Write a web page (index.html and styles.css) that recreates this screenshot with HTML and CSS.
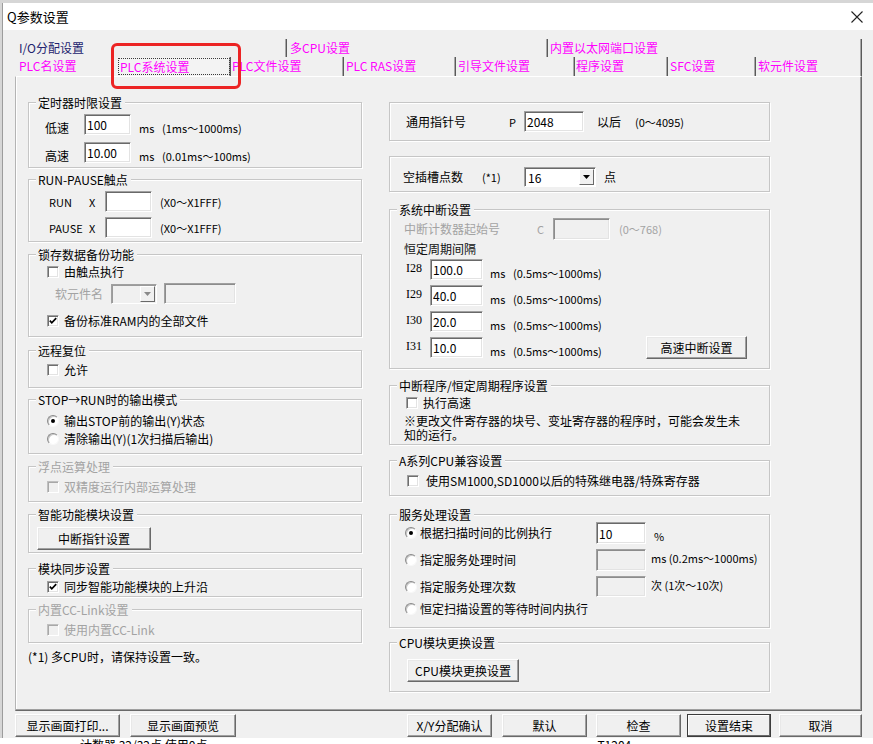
FILE: index.html
```html
<!DOCTYPE html>
<html lang="zh-CN">
<head>
<meta charset="utf-8">
<title>Q参数设置</title>
<link rel="stylesheet" href="styles.css">
</head>
<body>
<div class="screen">
  <div class="window">
    <div class="titlebar">
      <span class="title">Q参数设置</span>
      <svg class="close" width="12" height="12" viewBox="0 0 12 12"><path d="M0.5 0.5 L11.5 11.5 M11.5 0.5 L0.5 11.5" stroke="#222" stroke-width="1.1" fill="none"/></svg>
    </div>
    <div class="dlg">
      <div class="tabrow row1">
        <div class="tab first navy">I/O分配设置</div>
        <div class="tab p3">多CPU设置</div>
        <div class="tab">内置以太网端口设置</div>
      </div>
      <div class="tabrow row2">
        <div class="tab first nosep">PLC名设置</div>
        <div class="tab sel"><span class="focus">PLC系统设置</span></div>
        <div class="tab p1">PLC文件设置</div>
        <div class="tab">PLC RAS设置</div>
        <div class="tab">引导文件设置</div>
        <div class="tab p1">程序设置</div>
        <div class="tab">SFC设置</div>
        <div class="tab">软元件设置</div>
      </div>
      <div class="panel">
        <div class="col col-left">
          <div class="group g1">
            <div class="legend">定时器时限设置</div>
            <div class="row r21 mt4 pl16">
              <span class="w39 lo">低速</span>
              <input class="edit w47" value="100">
              <span class="ml8 w23 lo lat">ms</span>
              <span class="lo lat">(1ms～1000ms)</span>
            </div>
            <div class="row r21 mt7 pl16">
              <span class="w39 lo">高速</span>
              <input class="edit w47" value="10.00">
              <span class="ml8 w23 lo lat">ms</span>
              <span class="lo lat">(0.01ms～100ms)</span>
            </div>
          </div>

          <div class="group g2">
            <div class="legend">RUN-PAUSE触点</div>
            <div class="row r21 mt4 pl20">
              <span class="w40 lat">RUN</span><span class="w16 lat">X</span>
              <input class="edit w47" value="">
              <span class="ml8 lat">(X0～X1FFF)</span>
            </div>
            <div class="row r21 mt5 pl20">
              <span class="w40 lat">PAUSE</span><span class="w16 lat">X</span>
              <input class="edit w47" value="">
              <span class="ml8 lat">(X0～X1FFF)</span>
            </div>
          </div>

          <div class="group g3">
            <div class="legend">锁存数据备份功能</div>
            <div class="crow mt2 pl18"><span class="chk"></span><span>由触点执行</span></div>
            <div class="row r21 mt3 pl26">
              <span class="w56 dis">软元件名</span>
              <span class="combo off w46"><span class="val"></span><span class="drop"><svg width="7" height="4" viewBox="0 0 7 4"><polygon points="0,0 7,0 3.5,4" fill="#8a8a8a"/></svg></span></span>
              <input class="edit off w72 ml7" value="" disabled>
            </div>
            <div class="crow mt9 pl18"><span class="chk"><svg width="10" height="10" viewBox="0 0 10 10"><path d="M1.8 4.6 L3.8 6.8 L8.2 2.2" stroke="#000" stroke-width="1.7" fill="none"/></svg></span><span>备份标准RAM内的全部文件</span></div>
          </div>

          <div class="group g4">
            <div class="legend">远程复位</div>
            <div class="crow mt4 pl18"><span class="chk"></span><span>允许</span></div>
          </div>

          <div class="group g5">
            <div class="legend">STOP→RUN时的输出模式</div>
            <div class="crow mt6 pl18"><span class="radio"><i class="dot"></i></span><span>输出STOP前的输出(Y)状态</span></div>
            <div class="crow mt2 pl18"><span class="radio"></span><span>清除输出(Y)(1次扫描后输出)</span></div>
          </div>

          <div class="group g6">
            <div class="legend dis">浮点运算处理</div>
            <div class="crow mt5 pl18"><span class="chk off"></span><span class="dis">双精度运行内部运算处理</span></div>
          </div>

          <div class="group g7">
            <div class="legend">智能功能模块设置</div>
            <div class="mt5 pl8"><button class="btn bw114">中断指针设置</button></div>
          </div>

          <div class="group g8">
            <div class="legend">模块同步设置</div>
            <div class="crow mt3 pl18"><span class="chk"><svg width="10" height="10" viewBox="0 0 10 10"><path d="M1.8 4.6 L3.8 6.8 L8.2 2.2" stroke="#000" stroke-width="1.7" fill="none"/></svg></span><span>同步智能功能模块的上升沿</span></div>
          </div>

          <div class="group g9">
            <div class="legend dis">内置CC-Link设置</div>
            <div class="crow mt5 pl18"><span class="chk off"></span><span class="dis">使用内置CC-Link</span></div>
          </div>

          <p class="footnote">(*1) 多CPU时，请保持设置一致。</p>
        </div>

        <div class="col col-right">
          <div class="group h1">
            <div class="row r21 pl16">
              <span class="w103">通用指针号</span><span class="w15 lat">P</span>
              <input class="edit w60" value="2048">
              <span class="ml13 w38">以后</span>
              <span class="lat">(0～4095)</span>
            </div>
          </div>

          <div class="group h2">
            <div class="row r20 pl13">
              <span class="w79">空插槽点数</span><span class="w42 lat">(*1)</span>
              <span class="combo w72"><span class="val">16</span><span class="drop"><svg width="7" height="4" viewBox="0 0 7 4"><polygon points="0,0 7,0 3.5,4" fill="#000"/></svg></span></span>
              <span class="ml8">点</span>
            </div>
          </div>

          <div class="group h3">
            <div class="legend">系统中断设置</div>
            <div class="row r22 mt1 pl14">
              <span class="w133 dis">中断计数器起始号</span><span class="w16 dis lat">C</span>
              <input class="edit off w57" value="" disabled>
              <span class="ml9 dis lat">(0～768)</span>
            </div>
            <div class="mt2 pl14 strong">恒定周期间隔</div>
            <div class="row r21 mt3 pl16">
              <span class="w24 hi ser">I28</span><input class="edit w53" value="100.0">
              <span class="ml7 w23 lo lat">ms</span><span class="lo lat">(0.5ms～1000ms)</span>
            </div>
            <div class="row r21 mt5 pl16">
              <span class="w24 hi ser">I29</span><input class="edit w53" value="40.0">
              <span class="ml7 w23 lo lat">ms</span><span class="lo lat">(0.5ms～1000ms)</span>
            </div>
            <div class="row r21 mt5 pl16">
              <span class="w24 hi ser">I30</span><input class="edit w53" value="20.0">
              <span class="ml7 w23 lo lat">ms</span><span class="lo lat">(0.5ms～1000ms)</span>
            </div>
            <div class="row r21 mt5 pl16">
              <span class="w24 hi ser">I31</span><input class="edit w53" value="10.0">
              <span class="ml7 w23 lo lat">ms</span><span class="lo lat">(0.5ms～1000ms)</span>
              <button class="btn bw101 push">高速中断设置</button>
            </div>
          </div>

          <div class="group h4">
            <div class="legend">中断程序/恒定周期程序设置</div>
            <div class="crow mt2 pl16"><span class="chk"></span><span>执行高速</span></div>
            <p class="note">※更改文件寄存器的块号、变址寄存器的程序时，可能会发生未<br>知的运行。</p>
          </div>

          <div class="group h5">
            <div class="legend">A系列CPU兼容设置</div>
            <div class="crow wide mt5 pl17"><span class="chk"></span><span>使用SM1000,SD1000以后的特殊继电器/特殊寄存器</span></div>
          </div>

          <div class="group h6">
            <div class="legend">服务处理设置</div>
            <div class="row r22 pl15">
              <span class="radio"><i class="dot"></i></span><span class="w176 ml3">根据扫描时间的比例执行</span>
              <input class="edit w50" value="10"><span class="ml8 lo lat">%</span>
            </div>
            <div class="row r22 mt5 pl15">
              <span class="radio"></span><span class="w176 ml3">指定服务处理时间</span>
              <input class="edit off w50" value="" disabled><span class="ml5 hi lat">ms (0.2ms～1000ms)</span>
            </div>
            <div class="row r21 mt5 pl15">
              <span class="radio"></span><span class="w176 ml3">指定服务处理次数</span>
              <input class="edit off w50" value="" disabled><span class="ml5 hi lat">次 (1次～10次)</span>
            </div>
            <div class="row r14 mt5 pl15">
              <span class="radio"></span><span class="ml3">恒定扫描设置的等待时间内执行</span>
            </div>
          </div>

          <div class="group h7">
            <div class="legend">CPU模块更换设置</div>
            <div class="mt9 pl17"><button class="btn bw112">CPU模块更换设置</button></div>
          </div>
        </div>
      </div>

      <div class="footer">
        <button class="btn f1">显示画面打印...</button>
        <button class="btn f2">显示画面预览</button>
        <button class="btn f3">X/Y分配确认</button>
        <button class="btn f4">默认</button>
        <button class="btn f5">检查</button>
        <button class="btn f6 default">设置结束</button>
        <button class="btn f7">取消</button>
      </div>
    </div>
  </div>
  <div class="behind"><span class="b1">计数器 32/32点 使用0点</span><span class="b2">T1204</span></div>
  <div class="annot"></div>
</div>
</body>
</html>
```

FILE: styles.css
```css
* { box-sizing: border-box; margin: 0; padding: 0; }
html, body { width: 873px; height: 744px; overflow: hidden; }
body {
  background: #d6d6d6;
  font-family: "Noto Sans CJK SC", "Noto Sans", sans-serif;
  font-size: 12px;
  line-height: 14px;
  color: #000;
}
.screen { position: relative; width: 873px; height: 744px; padding-top: 3px; display: flex; flex-direction: column; }
.window {
  margin-left: 2px; width: 871px; height: 735px; flex: none;
  border-left: 1px solid #9c9c9c; background: #f0f0f0;
  display: flex; flex-direction: column;
}
.titlebar {
  height: 27px; flex: none; background: #fff;
  display: flex; align-items: center; justify-content: space-between;
  padding: 0 10px 0 4px;
}
.title { font-size: 13px; line-height: 16px; }
.close { display: block; }

.dlg { padding: 9px 11px 0 12px; display: flex; flex-direction: column; }

/* tabs */
.tabrow { display: grid; width: 847px; }
.row1 { grid-template-columns: 272px 261px 314px; height: 18px; }
.row2 { grid-template-columns: 101px 115px 113px 112px 119px 93px 88px 106px; height: 19px; }
.tab {
  color: #ff00ff; white-space: nowrap; overflow: hidden;
  padding-left: 2px; line-height: 18px;
  border-right: 1px solid #5a5a5a; box-shadow: inset -1px 0 0 #a8a8a8;
}
.tab.first { padding-left: 4px; }
.tab.p3 { padding-left: 3px; }
.tab.p1 { padding-left: 1px; }
.tab.nosep { border-right: none; box-shadow: none; }
.tab.navy { color: #23236e; }
.tab.sel { padding: 1px 0 1px 2px; background: #f3f3f3; }
.focus { display: block; height: 17px; border: 1px dotted #3a3a3a; padding-left: 1px; line-height: 15px; }

/* panel */
.panel {
  width: 847px; height: 635px; flex: none;
  border-top: 1px solid #fff; border-left: 1px solid #b4b4b4;
  border-right: 1px solid #696969; border-bottom: 1px solid #696969;
  box-shadow: inset -1px -1px 0 #a0a0a0, inset 1px 0 0 #fff;
  display: flex; gap: 27px; padding: 25px 0 0 12px;
}
.col { display: flex; flex-direction: column; flex: none; }
.col-left { width: 334px; }
.col-right { width: 381px; }

.group {
  flex: none;
  border: 1px solid #c6c6c6;
  box-shadow: 1px 1px 0 #fff, inset 1px 1px 0 #fff;
}
.legend {
  width: max-content; height: 15px; line-height: 15px;
  margin: -8px 0 0 7px; padding: 0 3px 0 2px;
  background: #f0f0f0;
}
.dis { color: #a3a3a3; }
.strong { color: #111; }
.lat { font-size: 11px; }
.ser { font-family: "Liberation Serif", "DejaVu Serif", serif; font-size: 12px; }

.g1 { height: 66px; }
.g2 { height: 63px; margin-top: 11px; }
.g3 { height: 83px; margin-top: 12px; }
.g4 { height: 38px; margin-top: 13px; }
.g5 { height: 55px; margin-top: 11px; }
.g6 { height: 36px; margin-top: 12px; }
.g7 { height: 39px; margin-top: 12px; }
.g8 { height: 29px; margin-top: 15px; }
.g9 { height: 34px; margin-top: 12px; }
.footnote { margin-top: 7px; }

.h1 { height: 39px; padding-top: 8px; }
.h2 { height: 36px; margin-top: 15px; padding-top: 10px; }
.h3 { height: 160px; margin-top: 17px; }
.h4 { height: 60px; margin-top: 16px; }
.h5 { height: 36px; margin-top: 15px; }
.h6 { height: 114px; margin-top: 18px; }
.h7 { height: 50px; margin-top: 14px; }

/* rows */
.row { display: flex; align-items: center; white-space: nowrap; }
.r14 { height: 14px; }
.r20 { height: 20px; }
.r21 { height: 21px; }
.r22 { height: 22px; }
.crow { display: flex; align-items: center; gap: 5px; height: 16px; white-space: nowrap; }
.crow.wide { gap: 7px; }
.lo { margin-top: 6px; }
.hi { margin-bottom: 4px; }
.note { margin-top: 3px; padding-left: 14px; line-height: 14px; white-space: nowrap; }

.mt1 { margin-top: 1px; } .mt2 { margin-top: 2px; } .mt3 { margin-top: 3px; } .mt4 { margin-top: 4px; }
.mt5 { margin-top: 5px; } .mt6 { margin-top: 6px; } .mt7 { margin-top: 7px; } .mt9 { margin-top: 9px; }
.pl8 { padding-left: 8px; } .pl13 { padding-left: 13px; } .pl14 { padding-left: 14px; } .pl15 { padding-left: 15px; }
.pl16 { padding-left: 16px; } .pl17 { padding-left: 17px; } .pl18 { padding-left: 18px; } .pl20 { padding-left: 20px; }
.pl26 { padding-left: 26px; }
.ml3 { margin-left: 3px; } .ml5 { margin-left: 5px; } .ml7 { margin-left: 7px; } .ml8 { margin-left: 8px; }
.ml9 { margin-left: 9px; } .ml13 { margin-left: 13px; }

.w15 { width: 15px; flex: none; } .w16 { width: 16px; flex: none; } .w23 { width: 23px; flex: none; }
.w24 { width: 24px; flex: none; } .w38 { width: 38px; flex: none; } .w39 { width: 39px; flex: none; }
.w40 { width: 40px; flex: none; } .w42 { width: 42px; flex: none; } .w46 { width: 46px; flex: none; }
.w47 { width: 47px; flex: none; } .w50 { width: 50px; flex: none; } .w53 { width: 53px; flex: none; }
.w56 { width: 56px; flex: none; } .w57 { width: 57px; flex: none; } .w60 { width: 60px; flex: none; }
.w72 { width: 72px; flex: none; } .w79 { width: 79px; flex: none; } .w103 { width: 103px; flex: none; }
.w133 { width: 133px; flex: none; } .w176 { width: 176px; flex: none; }

/* controls */
.edit {
  height: 100%; padding: 0 2px;
  font: inherit; font-size: 12px; color: #000; outline: none;
  background: #fff;
  border: 1px solid; border-color: #a0a0a0 #fff #fff #a0a0a0;
  box-shadow: inset 1px 1px 0 #696969, inset -1px -1px 0 #e3e3e3;
}
.edit.off { background: #f0f0f0; box-shadow: inset 1px 1px 0 #8c8c8c, inset -1px -1px 0 #e3e3e3; }

.combo {
  display: flex; height: 20px; background: #fff;
  border: 1px solid; border-color: #a0a0a0 #fff #fff #a0a0a0;
  box-shadow: inset 1px 1px 0 #696969;
}
.combo.off { background: #f0f0f0; box-shadow: inset 1px 1px 0 #9a9a9a; }
.combo .val { flex: 1; padding: 2px 0 0 3px; line-height: 16px; }
.combo .drop {
  width: 15px; height: 16px; margin: 1px 1px 0 0; flex: none;
  background: #f0f0f0;
  border: 1px solid; border-color: #fff #696969 #696969 #fff;
  display: flex; align-items: center; justify-content: center;
}
.combo .drop svg { display: block; }

.chk {
  width: 12px; height: 12px; flex: none; background: #fff;
  border: 1px solid; border-color: #a0a0a0 #fff #fff #a0a0a0;
  box-shadow: inset 1px 1px 0 #6e6e6e, inset -1px -1px 0 #e3e3e3;
  display: flex; align-items: center; justify-content: center;
}
.chk svg { display: block; }
.chk.off { background: #f0f0f0; border-color: #c0c0c0 #fff #fff #c0c0c0; box-shadow: inset 1px 1px 0 #a8a8a8; }

.radio {
  width: 12px; height: 12px; flex: none; border-radius: 50%;
  background: #fff;
  border: 1px solid; border-color: #8a8a8a #f8f8f8 #f8f8f8 #8a8a8a;
  box-shadow: inset 1px 1px 0 #c8c8c8;
  display: flex; align-items: center; justify-content: center;
}
.dot { display: block; width: 4px; height: 4px; border-radius: 50%; background: #000; }

.btn {
  height: 23px; flex: none;
  font: inherit; font-size: 12px; color: #000;
  background: #f0f0f0;
  border: 1px solid; border-color: #fff #696969 #696969 #fff;
  box-shadow: inset -1px -1px 0 #a0a0a0, inset 1px 1px 0 #e8e8e8;
  line-height: 14px; padding: 0; text-align: center; white-space: nowrap;
}
.bw101 { width: 101px; }
.bw112 { width: 112px; }
.bw114 { width: 114px; }
.push { margin-left: auto; margin-right: 22px; }

.footer { display: flex; height: 23px; margin-top: 3px; }
.f1 { width: 105px; }
.f2 { width: 106px; margin-left: 10px; }
.f3 { width: 85px; margin-left: 171px; }
.f4 { width: 85px; margin-left: 10px; }
.f5 { width: 85px; margin-left: 9px; }
.f6 { width: 84px; margin-left: 6px; }
.f7 { width: 83px; margin-left: 8px; }
.btn.default { border-color: #3c3c3c; box-shadow: inset -1px -1px 0 #696969, inset 1px 1px 0 #fff; }

.behind { height: 6px; flex: none; background: #fff; overflow: hidden; display: flex; white-space: nowrap; font-size: 12px; line-height: 14px; }
.b1 { margin-left: 80px; }
.b2 { margin-left: 390px; }

.annot {
  position: absolute; left: 111px; top: 43px; width: 130px; height: 46px;
  border: 3px solid #ec2424; border-radius: 6px;
}
```
